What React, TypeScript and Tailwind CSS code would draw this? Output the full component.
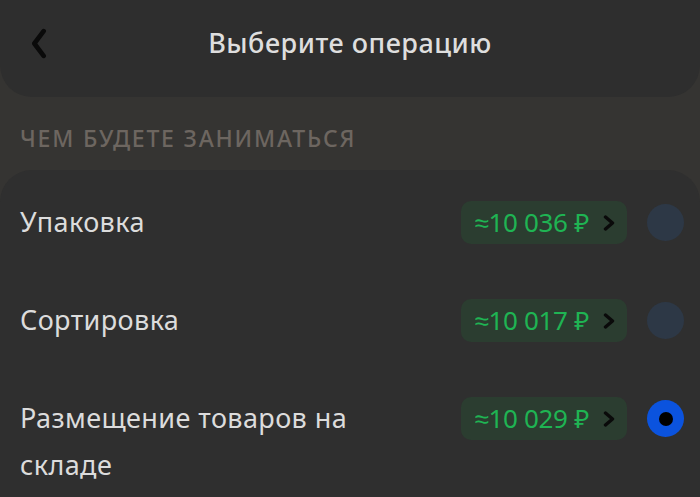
import React from "react";

const rows = [
  { label: "Упаковка", price: "≈10 036 ₽", selected: false },
  { label: "Сортировка", price: "≈10 017 ₽", selected: false },
  { label: "Размещение товаров на складе", price: "≈10 029 ₽", selected: true },
];

function Chevron({ className }: { className?: string }) {
  return (
    <svg viewBox="0 0 12 16" className={className} fill="none" stroke="currentColor" strokeWidth="3.4" strokeLinecap="round" strokeLinejoin="round">
      <path d="M2.5 2 L9.5 8 L2.5 14" />
    </svg>
  );
}

export default function App() {
  return (
    <div className="w-[700px] h-[497px] overflow-hidden bg-[#353432] flex flex-col" style={{ fontFamily: '"Noto Sans", sans-serif' }}>
      <div className="h-[97px] shrink-0 bg-[#2e2e2e] rounded-b-[32px] relative flex items-center justify-center pb-[10px]">
        <svg viewBox="0 0 20 30" className="absolute left-[29px] top-[28px] w-[21px] h-[31px]" fill="none" stroke="#0a0a0a" strokeWidth="4.5" strokeLinecap="round" strokeLinejoin="round">
          <path d="M14 3 L5 15 L14 27" />
        </svg>
        <span className="text-[27px] font-medium text-[#dedede] tracking-[0.5px]">Выберите операцию</span>
      </div>
      <div className="h-[73px] shrink-0 flex items-center px-[20px] pt-[10px]">
        <span className="text-[23px] font-medium uppercase text-[#6d6660] tracking-[1.8px]">Чем будете заниматься</span>
      </div>
      <div className="flex-1 bg-[#2f2f2f] rounded-t-[32px] flex flex-col pt-[31px]">
        {rows.map((r, i) => (
          <div key={i} className="flex items-start pl-[20px] pr-[16px] h-[98px]">
            <div className="flex-1">
              <div className="max-w-[380px] text-[27px] leading-[47px] text-[#dcdcdc] tracking-[0.4px] -mt-[3px]">{r.label}</div>
            </div>
            <div className="flex items-center h-[43px] rounded-[10px] bg-[#2b3d30] pl-[13px] pr-[12px] gap-[14px]">
              <span className="text-[26px] text-[#1fb453] tracking-[-0.3px]">{r.price}</span>
              <Chevron className="w-[12px] h-[16px] text-[#0a0a0a]" />
            </div>
            <div className="w-[37px] h-[37px] ml-[20px] mt-[3px] rounded-full flex items-center justify-center shrink-0 bg-[#2d3846]" style={r.selected ? { backgroundColor: "#0b53de" } : undefined}>
              {r.selected && <div className="w-[14px] h-[14px] rounded-full bg-black" />}
            </div>
          </div>
        ))}
      </div>
    </div>
  );
}
